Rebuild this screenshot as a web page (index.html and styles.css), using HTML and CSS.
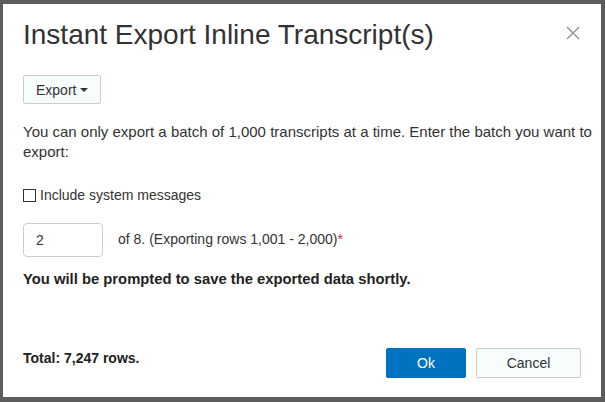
FILE: index.html
```html
<!DOCTYPE html>
<html>
<head>
<meta charset="utf-8">
<link rel="stylesheet" href="styles.css">
</head>
<body>
<div class="modal">
  <div class="modal-header">
    <h1 class="modal-title">Instant Export Inline Transcript(s)</h1>
    <button class="close" aria-label="Close">
      <svg width="14" height="14" viewBox="0 0 14 14"><path d="M1 1L13 13M13 1L1 13" stroke="#9a9a9a" stroke-width="1.6" fill="none"/></svg>
    </button>
  </div>
  <div class="modal-body">
    <button class="btn btn-default export-btn">Export <span class="caret"></span></button>
    <p class="intro">You can only export a batch of 1,000 transcripts at a time. Enter the batch you want to export:</p>
    <label class="check"><span class="box"></span>Include system messages</label>
    <div class="batch-row">
      <input class="batch-input" type="text" value="2">
      <span class="batch-text">of 8. (Exporting rows 1,001 - 2,000)<span class="req">*</span></span>
    </div>
    <p class="notice">You will be prompted to save the exported data shortly.</p>
  </div>
  <div class="modal-footer">
    <span class="total">Total: 7,247 rows.</span>
    <div class="actions">
      <button class="btn btn-primary">Ok</button>
      <button class="btn btn-default cancel">Cancel</button>
    </div>
  </div>
</div>
</body>
</html>
```

FILE: styles.css
```css
html, body {
  margin: 0;
  padding: 0;
  background: #5c5c5c;
  width: 605px;
  height: 402px;
  overflow: hidden;
}
body {
  padding: 4px 0 0 3px;
  box-sizing: border-box;
  font-family: "Liberation Sans", Arial, sans-serif;
  font-size: 14px;
  color: #333;
}
.modal {
  width: 598px;
  height: 393px;
  background: #fff;
  display: flex;
  flex-direction: column;
  box-sizing: border-box;
  padding: 0 20px;
}
.modal-header {
  display: flex;
  justify-content: space-between;
  align-items: flex-start;
  padding-top: 15px;
}
.modal-title {
  margin: 0;
  font-size: 28px;
  line-height: 32px;
  font-weight: normal;
  color: #333;
}
.close {
  border: 0;
  background: none;
  padding: 0;
  margin: 7px 1px 0 0;
  width: 14px;
  height: 14px;
  display: block;
}
.close svg { display: block; }
.modal-body {
  padding-top: 24px;
  flex: 1;
}
.btn {
  font-family: "Liberation Sans", Arial, sans-serif;
  font-size: 14px;
  border-radius: 2px;
  box-sizing: border-box;
  height: 30px;
  padding: 0 12px;
  cursor: pointer;
  white-space: nowrap;
}
.btn-default {
  background: #f7fcfd;
  border: 1px solid #cccccc;
  color: #333;
}
.btn-primary {
  background: #0073c0;
  border: 1px solid #0073c0;
  color: #fff;
  width: 80px;
}
.export-btn {
  height: 29px;
  width: 78px;
  display: block;
  text-align: left;
  padding: 0 0 0 12px;
}
.caret {
  display: inline-block;
  width: 0;
  height: 0;
  border-top: 4px solid #333;
  border-left: 4px solid transparent;
  border-right: 4px solid transparent;
  vertical-align: middle;
  margin-top: -2px;
}
.intro {
  margin: 18px -14px 0 0;
  font-size: 15px;
  line-height: 20px;
}
.check {
  display: flex;
  align-items: center;
  margin-top: 23px;
  line-height: 20px;
}
.box {
  width: 13px;
  height: 13px;
  border: 1px solid #333;
  box-sizing: border-box;
  margin-right: 4px;
}
.batch-row {
  display: flex;
  align-items: center;
  margin-top: 18px;
}
.batch-input {
  width: 80px;
  height: 34px;
  box-sizing: border-box;
  border: 1px solid #cccccc;
  border-radius: 4px;
  padding: 0 12px;
  font-family: "Liberation Sans", Arial, sans-serif;
  font-size: 14px;
  color: #333;
  margin: 0 15px 0 0;
}
.batch-text {
  margin-top: -3px;
}
.req {
  color: #c7254e;
}
.notice {
  margin: 12px 0 0;
  font-size: 14.8px;
  font-weight: bold;
  line-height: 20px;
  color: #222;
}
.modal-footer {
  display: flex;
  justify-content: space-between;
  align-items: flex-start;
  padding-bottom: 19px;
}
.total {
  font-weight: bold;
  color: #222;
  line-height: 20px;
}
.actions {
  display: flex;
  gap: 10px;
}
.cancel {
  width: 105px;
}
```
